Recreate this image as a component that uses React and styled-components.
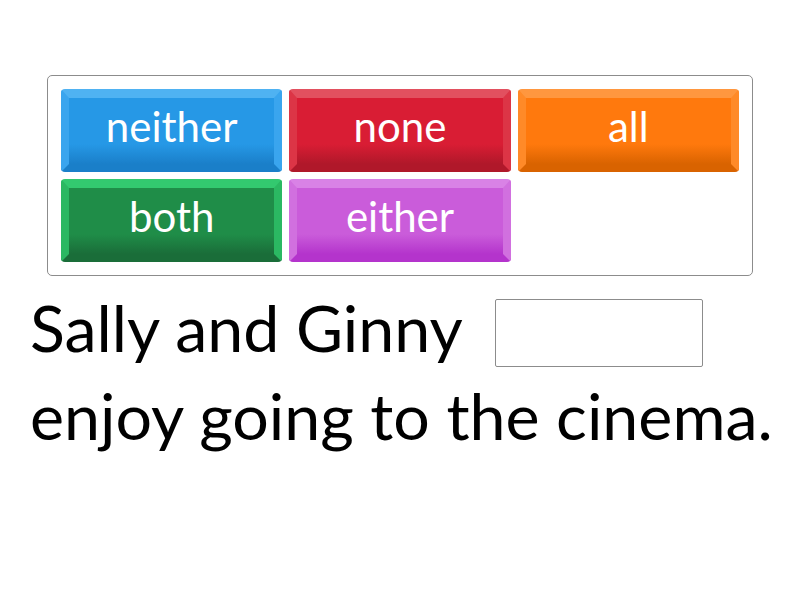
import React from "react";
import styled, { createGlobalStyle } from "styled-components";

const GlobalStyle = createGlobalStyle`
  html, body {
    margin: 0;
    padding: 0;
    background: #ffffff;
  }
  body {
    font-family: Lato, "Open Sans", sans-serif;
  }
`;

const palette = {
  blue: { face: "#2698e6", top: "#4fb2f2", side: "#3aa5ee", bottom: "#1a7fc9" },
  red: { face: "#d91d34", top: "#e2505f", side: "#dc3546", bottom: "#b0182a" },
  orange: { face: "#ff790d", top: "#ff973f", side: "#ff8a28", bottom: "#d96300" },
  green: { face: "#1f8d48", top: "#33c96f", side: "#2bb862", bottom: "#1a6d39" },
  purple: { face: "#ca5cda", top: "#d982e6", side: "#d170df", bottom: "#b434cc" },
};

const words = [
  { text: "neither", color: "blue" },
  { text: "none", color: "red" },
  { text: "all", color: "orange" },
  { text: "both", color: "green" },
  { text: "either", color: "purple" },
];

export default function App() {
  return (
    <React.Fragment>
      <GlobalStyle />
      <Page>
        <WordBank>
          {words.map((w) => (
            <Tile key={w.text} $c={palette[w.color]}>
              {w.text}
            </Tile>
          ))}
        </WordBank>
        <Sentence>
          Sally and Ginny <Blank /> enjoy going to the cinema.
        </Sentence>
      </Page>
    </React.Fragment>
  );
}

const Page = styled.main`
  width: 800px;
  height: 600px;
  padding-top: 75px;
  box-sizing: border-box;
`;

const WordBank = styled.div`
  width: 706px;
  margin: 0 0 0 47px;
  box-sizing: border-box;
  border: 1px solid #8c8c8c;
  border-radius: 5px;
  padding: 13px;
  display: grid;
  grid-template-columns: repeat(3, 1fr);
  grid-auto-rows: 83px;
  gap: 7px;
`;

const Tile = styled.div`
  box-sizing: border-box;
  display: flex;
  align-items: center;
  justify-content: center;
  border-radius: 4px;
  border-style: solid;
  border-width: 9px 8px 8px 8px;
  border-color: ${(p) => `${p.$c.top} ${p.$c.side} ${p.$c.bottom} ${p.$c.side}`};
  background: ${(p) => `linear-gradient(${p.$c.face}, ${p.$c.face} 70%, ${p.$c.bottom})`};
  color: #ffffff;
  font-family: Lato, sans-serif;
  font-size: 42px;
  padding-bottom: 11px;
  cursor: pointer;
`;

const Sentence = styled.p`
  margin: 7px 0 0;
  padding: 0 10px 0 30px;
  font-family: Lato, sans-serif;
  font-size: 64.5px;
  line-height: 88px;
  color: #000000;
`;

const Blank = styled.span`
  display: inline-block;
  box-sizing: border-box;
  width: 208px;
  height: 68px;
  margin-left: 17px;
  vertical-align: -15px;
  border: 1px solid #8c8c8c;
  border-radius: 2px;
  background: #ffffff;
`;
